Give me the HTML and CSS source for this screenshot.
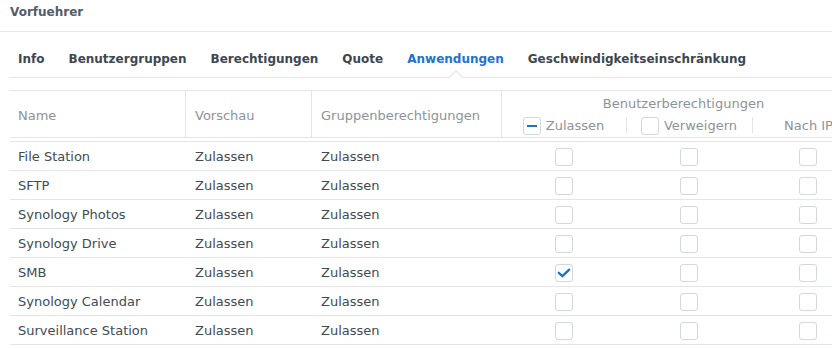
FILE: index.html
```html
<!DOCTYPE html>
<html lang="de">
<head>
<meta charset="utf-8">
<title>Vorfuehrer</title>
<link rel="stylesheet" href="styles.css">
</head>
<body>
<div class="page">
  <div class="title-bar">Vorfuehrer</div>
  <nav class="tabs">
    <span class="tab">Info</span>
    <span class="tab">Benutzergruppen</span>
    <span class="tab">Berechtigungen</span>
    <span class="tab">Quote</span>
    <span class="tab active">Anwendungen</span>
    <span class="tab">Geschwindigkeitseinschränkung</span>
  </nav>
  <div class="grid">
    <div class="grid-head">
      <div class="hcell first">Name</div>
      <div class="hcell">Vorschau</div>
      <div class="hcell">Gruppenberechtigungen</div>
      <div class="hgroup">
        <div class="hgroup-label">Benutzerberechtigungen</div>
        <div class="hgroup-subs">
          <div class="hsub s1"><span class="cb indet"></span><span>Zulassen</span></div>
          <div class="hsub s2"><span class="sep"></span><span class="cb"></span><span>Verweigern</span></div>
          <div class="hsub s3"><span class="sep"></span><span>Nach IP</span></div>
        </div>
      </div>
    </div>
    <div class="grid-body">
      <div class="row"><div class="c first">File Station</div><div class="c">Zulassen</div><div class="c">Zulassen</div><div class="c cc"><span class="cb"></span></div><div class="c cc"><span class="cb"></span></div><div class="c cc c3"><span class="cb"></span></div></div>
      <div class="row"><div class="c first">SFTP</div><div class="c">Zulassen</div><div class="c">Zulassen</div><div class="c cc"><span class="cb"></span></div><div class="c cc"><span class="cb"></span></div><div class="c cc c3"><span class="cb"></span></div></div>
      <div class="row"><div class="c first">Synology Photos</div><div class="c">Zulassen</div><div class="c">Zulassen</div><div class="c cc"><span class="cb"></span></div><div class="c cc"><span class="cb"></span></div><div class="c cc c3"><span class="cb"></span></div></div>
      <div class="row"><div class="c first">Synology Drive</div><div class="c">Zulassen</div><div class="c">Zulassen</div><div class="c cc"><span class="cb"></span></div><div class="c cc"><span class="cb"></span></div><div class="c cc c3"><span class="cb"></span></div></div>
      <div class="row"><div class="c first">SMB</div><div class="c">Zulassen</div><div class="c">Zulassen</div><div class="c cc"><span class="cb checked"><svg viewBox="0 0 18 18" width="18" height="18"><polyline points="3.8,8.8 7.4,12.2 14.2,5.6" fill="none" stroke="#1a72d1" stroke-width="2.3" stroke-linecap="round" stroke-linejoin="round"/></svg></span></div><div class="c cc"><span class="cb"></span></div><div class="c cc c3"><span class="cb"></span></div></div>
      <div class="row"><div class="c first">Synology Calendar</div><div class="c">Zulassen</div><div class="c">Zulassen</div><div class="c cc"><span class="cb"></span></div><div class="c cc"><span class="cb"></span></div><div class="c cc c3"><span class="cb"></span></div></div>
      <div class="row"><div class="c first">Surveillance Station</div><div class="c">Zulassen</div><div class="c">Zulassen</div><div class="c cc"><span class="cb"></span></div><div class="c cc"><span class="cb"></span></div><div class="c cc c3"><span class="cb"></span></div></div>
    </div>
  </div>
</div>
</body>
</html>
```

FILE: styles.css
```css
* { box-sizing: border-box; }
html, body {
  margin: 0;
  padding: 0;
  background: #ffffff;
  overflow: hidden;
}
body {
  font-family: "DejaVu Sans", Verdana, sans-serif;
  font-size: 13px;
  color: #414b55;
  width: 832px;
  height: 348px;
}
.page {
  width: 900px;
}
.title-bar {
  height: 32px;
  padding: 4px 0 0 10px;
  font-size: 12px;
  font-weight: bold;
  line-height: 16px;
  color: #525c66;
  border-bottom: 1px solid #e6e9ec;
  width: 832px;
}
.tabs {
  display: flex;
  gap: 24px;
  margin-left: 10px;
  width: 822px;
  padding: 19px 0 10px 8px;
  border-bottom: 1px solid #e3e6e9;
  position: relative;
}
.tab {
  font-weight: bold;
  font-size: 12px;
  line-height: 16px;
  color: #3d4752;
  white-space: nowrap;
  position: relative;
}
.tab.active {
  color: #1b74d1;
}
.tab.active::after {
  content: "";
  position: absolute;
  left: 50%;
  bottom: -15px;
  width: 9px;
  height: 9px;
  margin-left: -4px;
  background: #ffffff;
  border-left: 1px solid #e3e6e9;
  border-top: 1px solid #e3e6e9;
  transform: rotate(45deg);
}
.grid {
  margin: 12px 0 0 10px;
  width: 855px;
}
.grid-head {
  display: grid;
  grid-template-columns: 175px 126px 190px 364px;
  border-top: 1px solid #e3e6e9;
  border-bottom: 1px solid #e3e6e9;
  height: 48px;
  color: #8c939a;
}
.hcell {
  display: flex;
  align-items: center;
  padding-left: 9px;
  border-left: 1px solid #e3e6e9;
  line-height: 16px;
  padding-top: 3px;
}
.hcell.first {
  border-left: none;
  padding-left: 8px;
}
.hgroup {
  border-left: 1px solid #e3e6e9;
  display: flex;
  flex-direction: column;
  padding-top: 5px;
}
.hgroup-label {
  text-align: center;
  line-height: 16px;
  height: 16px;
}
.hgroup-subs {
  display: grid;
  grid-template-columns: 125px 126px 113px;
  margin-top: 5px;
  margin-left: -1px;
  height: 16px;
}
.hsub {
  display: flex;
  align-items: center;
  justify-content: center;
  gap: 5px;
  line-height: 16px;
  position: relative;
}
.hsub .sep {
  position: absolute;
  left: 0;
  top: 0;
  width: 1px;
  height: 16px;
  background: #e3e6e9;
}
.cb {
  display: inline-block;
  width: 18px;
  height: 18px;
  border: 1px solid #d3d8dd;
  border-radius: 3px;
  background: #ffffff;
  flex: none;
  position: relative;
}
.cb svg {
  position: absolute;
  left: -1px;
  top: -1px;
  display: block;
}
.cb.indet::after {
  content: "";
  position: absolute;
  left: 3px;
  top: 7px;
  width: 10px;
  height: 2px;
  background: #1a72d1;
}
.grid-body {
  margin-top: 3px;
  border-top: 1px solid #e3e6e9;
}
.row {
  display: grid;
  grid-template-columns: 175px 126px 190px 125px 126px 113px;
  height: 29px;
  border-bottom: 1px solid #e3e6e9;
}
.c {
  display: flex;
  align-items: center;
  padding-left: 10px;
  padding-top: 2px;
  line-height: 16px;
  white-space: nowrap;
}
.c.first {
  padding-left: 8px;
}
.c.cc {
  justify-content: center;
  padding-left: 0;
  padding-top: 1px;
}
.c.c3 {
  padding-right: 1px;
}
```
